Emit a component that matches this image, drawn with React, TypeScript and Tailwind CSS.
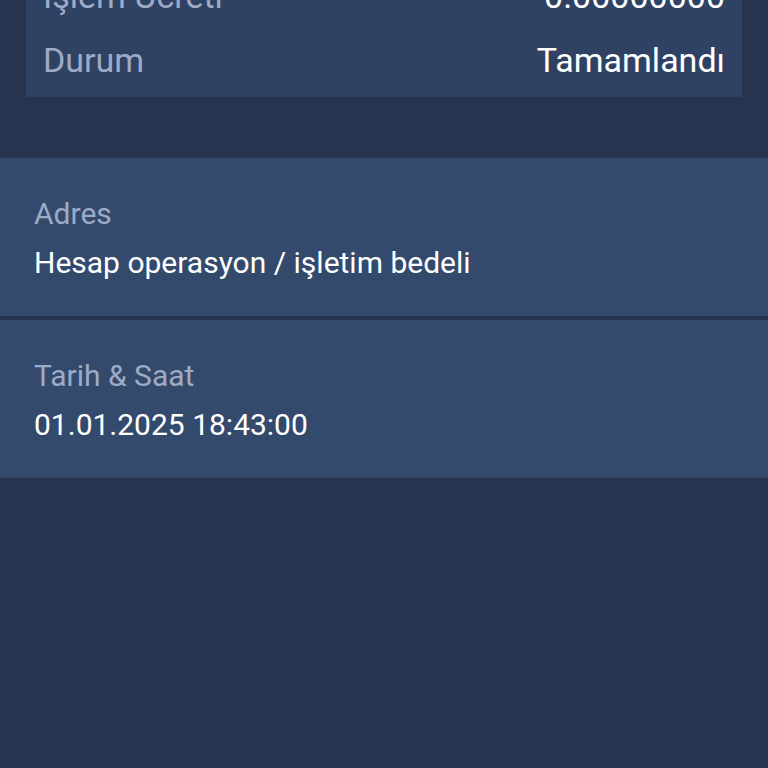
import React from "react";

const summary = [
  { label: "İşlem Ücreti", value: "0.00000000" },
  { label: "Durum", value: "Tamamlandı" },
];

const details = [
  { label: "Adres", value: "Hesap operasyon / işletim bedeli" },
  { label: "Tarih & Saat", value: "01.01.2025 18:43:00" },
];

export default function App() {
  return (
    <div
      className="w-[768px] h-[768px] overflow-hidden bg-[#263450] text-white"
      style={{ fontFamily: "Roboto, 'Noto Sans', sans-serif" }}
    >
      <div className="mx-[26px] mt-[-36px] bg-[#2f4264] px-[17px] pb-[5px]">
        {summary.map((row) => (
          <div key={row.label} className="flex h-[64px] items-center justify-between">
            <span className="text-[34px] text-[#9eabc6]">{row.label}</span>
            <span className="text-[34px] text-white">{row.value}</span>
          </div>
        ))}
      </div>

      <div className="mt-[61px] flex flex-col gap-[4px]">
        {details.map((row) => (
          <div key={row.label} className="h-[158px] bg-[#344a6d] px-[34px] pt-[38px]">
            <div className="text-[30px] leading-[36px] text-[#9eabc6]">{row.label}</div>
            <div className="mt-[13px] text-[30px] leading-[36px] text-white">{row.value}</div>
          </div>
        ))}
      </div>
    </div>
  );
}
